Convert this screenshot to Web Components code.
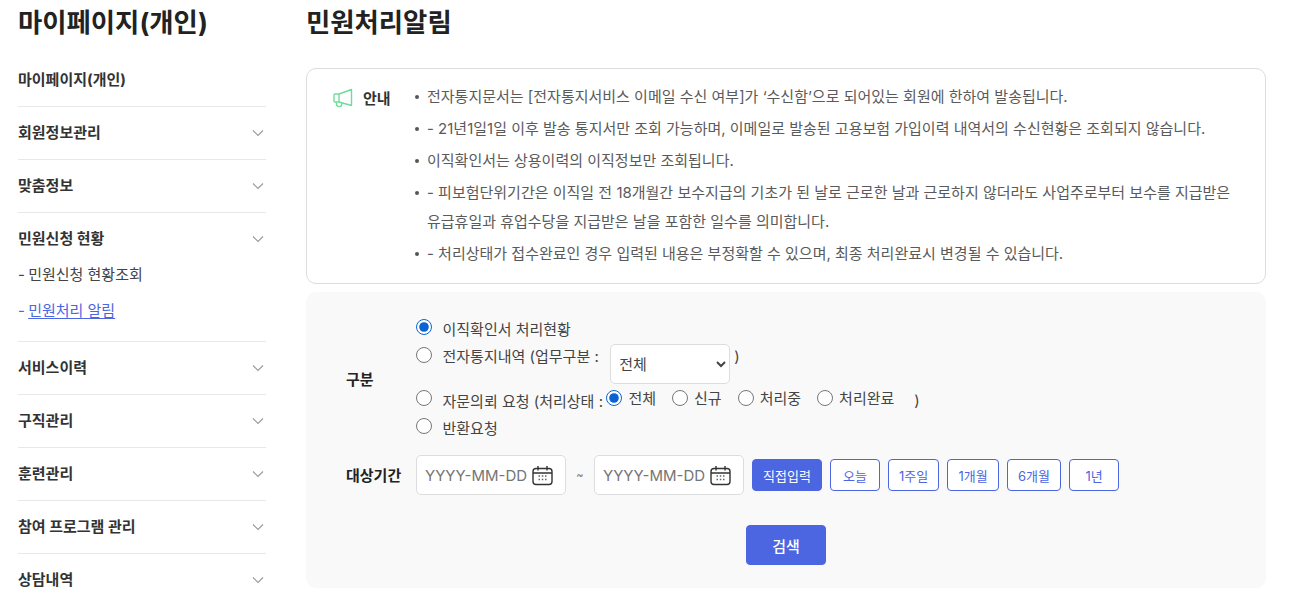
<!DOCTYPE html>
<html lang="ko">
<head>
<meta charset="utf-8">
<title>민원처리알림</title>
<style>
  html, body { margin: 0; height: 600px; overflow: hidden; background: #fff; }
  body { font-family: Inter, "Noto Sans CJK KR", sans-serif; color: #222; }
</style>
</head>
<body>
<my-page></my-page>

<script>
const FONT = `Inter, "Noto Sans CJK KR", sans-serif`;

// 왼쪽 메뉴 한 줄
class SideItem extends HTMLElement {
  connectedCallback() {
    const root = this.shadowRoot || this.attachShadow({ mode: 'open' });
    const arrow = this.hasAttribute('arrow');
    root.innerHTML = `
      <style>
        :host { display: block; border-bottom: 1px solid #e8e8e8; }
        :host([last]) { border-bottom: 0; }
        .head {
          box-sizing: border-box; height: 52px; padding-bottom: 4px; display: flex; align-items: center; justify-content: space-between;
          font-size: 15px; font-weight: 700; color: #333;
        }
        svg { width: 12px; height: 8px; margin: 3px 2px 0 0; }
        ::slotted(*) { display: block; }
      </style>
      <div class="head">
        <span>${this.getAttribute('label')}</span>
        ${arrow ? `<svg viewBox="0 0 12 8"><path d="M1 1.5l5 5 5-5" fill="none" stroke="#999" stroke-width="1.1"/></svg>` : ''}
      </div>
      <slot></slot>`;
  }
}
customElements.define('side-item', SideItem);

class SideMenu extends HTMLElement {
  constructor() {
    super();
    this.attachShadow({ mode: 'open' }).innerHTML = `
      <style>
        :host { display: block; width: 248px; flex: none; font-family: ${FONT}; }
        h2 { margin: 0; height: 54px; font-size: 26.4px; line-height: 44px; font-weight: 700; color: #222; }
        .sub { font-size: 15px; color: #444; height: 36px; line-height: 36px; }
        .sub b { font-weight: 400; margin-right: -1px; }
        .sub.on { color: #4c65e0; }
        .sub.on u { text-underline-offset: 2px; }
        .subs { margin-top: -8px; padding-bottom: 12px; }
      </style>
      <h2>마이페이지(개인)</h2>
      <side-item label="마이페이지(개인)"></side-item>
      <side-item label="회원정보관리" arrow></side-item>
      <side-item label="맞춤정보" arrow></side-item>
      <side-item label="민원신청 현황" arrow>
        <div class="subs">
          <div class="sub"><b>-</b> 민원신청 현황조회</div>
          <div class="sub on"><b>-</b> <u>민원처리 알림</u></div>
        </div>
      </side-item>
      <side-item label="서비스이력" arrow></side-item>
      <side-item label="구직관리" arrow></side-item>
      <side-item label="훈련관리" arrow></side-item>
      <side-item label="참여 프로그램 관리" arrow></side-item>
      <side-item label="상담내역" arrow last></side-item>`;
  }
}
customElements.define('side-menu', SideMenu);

class NoticeBox extends HTMLElement {
  constructor() {
    super();
    this.attachShadow({ mode: 'open' }).innerHTML = `
      <style>
        :host {
          display: flex; box-sizing: border-box; height: 216px; padding: 13px 0 0 26px;
          border: 1px solid #ddd; border-radius: 10px; background: #fff; font-family: ${FONT};
        }
        .tit { width: 81px; flex: none; display: flex; gap: 9px; height: 30px; align-items: center; font-size: 15px; font-weight: 700; color: #333; }
        svg { width: 21px; height: 21px; }
        ul { margin: 0; padding: 0; list-style: none; font-size: 15px; line-height: 29px; color: #5a5a5a; }
        li { position: relative; padding-left: 13px; margin-bottom: 3px; }
        li::before { content: ""; position: absolute; left: 1px; top: 13px; width: 4px; height: 4px; border-radius: 50%; background: #555; }
      </style>
      <div class="tit">
        <svg viewBox="0 0 21 21" fill="none" stroke="#6fdc9b" stroke-width="1.4" stroke-linejoin="round">
          <path d="M2 7H6L18.5 2.5V18.5L6 15H2a1 1 0 0 1-1-1V8a1 1 0 0 1 1-1z"/>
          <path d="M6 7v8M3.5 15.5v1.5a2.6 2.6 0 0 0 5.2 0v-1.3"/>
        </svg>
        <span>안내</span>
      </div>
      <ul>
        <li>전자통지문서는 [전자통지서비스 이메일 수신 여부]가 ‘수신함’으로 되어있는 회원에 한하여 발송됩니다.</li>
        <li>- 21년1일1일 이후 발송 통지서만 조회 가능하며, 이메일로 발송된 고용보험 가입이력 내역서의 수신현황은 조회되지 않습니다.</li>
        <li>이직확인서는 상용이력의 이직정보만 조회됩니다.</li>
        <li>- 피보험단위기간은 이직일 전 18개월간 보수지급의 기초가 된 날로 근로한 날과 근로하지 않더라도 사업주로부터 보수를 지급받은<br>유급휴일과 휴업수당을 지급받은 날을 포함한 일수를 의미합니다.</li>
        <li>- 처리상태가 접수완료인 경우 입력된 내용은 부정확할 수 있으며, 최종 처리완료시 변경될 수 있습니다.</li>
      </ul>`;
  }
}
customElements.define('notice-box', NoticeBox);

// 날짜 입력칸
class DateField extends HTMLElement {
  constructor() {
    super();
    this.attachShadow({ mode: 'open' }).innerHTML = `
      <style>
        :host {
          display: flex; align-items: center; box-sizing: border-box; width: 150px; height: 40px; padding: 0 10px 0 8px; gap: 5px;
          background: #fff; border: 1px solid #ddd; border-radius: 5px; font-size: 15px; color: #757575; font-family: ${FONT}; white-space: nowrap;
        }
        svg { width: 21px; height: 21px; flex: none; }
      </style>
      <span>YYYY-MM-DD</span>
      <svg viewBox="0 0 21 21" fill="none" stroke="#333" stroke-width="1.4">
        <rect x="1" y="3.5" width="19" height="16" rx="3"/>
        <path d="M1 8h19M6 1v4.5M15 1v4.5"/>
        <path d="M6.5 11h1.5M9.8 11h1.5M13 11h1.5M6.5 14.5h1.5M9.8 14.5h1.5M13 14.5h1.5" stroke="#666" stroke-width="1.3"/>
      </svg>`;
  }
}
customElements.define('date-field', DateField);

class SearchForm extends HTMLElement {
  constructor() {
    super();
    this.attachShadow({ mode: 'open' }).innerHTML = `
      <style>
        :host { display: block; box-sizing: border-box; height: 296px; margin-top: 8px; padding: 23px 40px 0; background: #f9f9f9; border-radius: 10px; font-family: ${FONT}; }
        .row { display: flex; align-items: center; }
        .lab { width: 70px; flex: none; font-size: 15px; font-weight: 700; color: #222; }
        .kind { padding-top: 1px; }
        .span { padding-bottom: 2px; }
        .opts { font-size: 15px; color: #444; }
        .opt { display: flex; align-items: center; white-space: nowrap; }
        label { display: inline-flex; align-items: center; }
        input { width: 16px; height: 16px; margin: 0 10.5px 0 0; flex: none; accent-color: #0a63d0; }
        .t { padding-top: 4px; }
        .o1 .t { padding-top: 3px; }
        .o4 .t { padding-top: 2px; }
        .o1 { height: 24px; }
        .o2 { height: 45px; align-items: flex-start; padding-top: 8px; box-sizing: border-box; }
        .o2 span.tx { line-height: 20px; }
        select {
          width: 120px; height: 40px; margin: -3px 4px 0 11.5px; padding: 0 0 0 4px; font: inherit; color: #444;
          background: #fff; border: 1px solid #ddd; border-radius: 5px;
        }
        .o3, .o4 { height: 28px; }
        .o3 .in { margin-left: 3.5px; display: flex; }
        .o3 .in label { margin-right: 16px; }
        .o3 .in input { margin-right: 6px; }
        .o3 .in span { padding-bottom: 1px; }
        .period { margin-top: 15px; }
        .tilde { width: 28px; text-align: center; font-size: 11px; color: #777; }
        .btns { display: flex; gap: 8px; margin-left: 8px; }
        button {
          height: 32px; padding: 0; font: 13px ${FONT}; color: #4c65e0; background: #fff;
          border: 1px solid #4c65e0; border-radius: 4px;
        }
        button.on { background: #4c65e0; color: #fff; }
        .go { display: flex; justify-content: center; margin-top: 30px; }
        .go button { width: 80px; height: 40px; font-size: 15px; font-weight: 500; background: #4c65e0; color: #fff; }
      </style>
      <div class="row">
        <div class="lab kind">구분</div>
        <div class="opts">
          <div class="opt o1"><label><input type="radio" name="g" checked><span class="t">이직확인서 처리현황</span></label></div>
          <div class="opt o2">
            <input type="radio" name="g"><span class="tx">전자통지내역 (업무구분 :</span>
            <select><option>전체</option></select><span class="tx">)</span>
          </div>
          <div class="opt o3">
            <input type="radio" name="g"><span class="t">자문의뢰 요청 (처리상태 :</span>
            <div class="in">
              <label><input type="radio" name="s" checked><span>전체</span></label>
              <label><input type="radio" name="s"><span>신규</span></label>
              <label><input type="radio" name="s"><span>처리중</span></label>
              <label><input type="radio" name="s"><span>처리완료</span></label>
            </div>
            <span class="t" style="margin-left:4px">)</span>
          </div>
          <div class="opt o4"><label><input type="radio" name="g"><span class="t">반환요청</span></label></div>
        </div>
      </div>
      <div class="row period">
        <div class="lab span">대상기간</div>
        <date-field></date-field>
        <div class="tilde">~</div>
        <date-field></date-field>
        <div class="btns">
          <button class="on" style="width:70px">직접입력</button>
          <button style="width:50px">오늘</button>
          <button style="width:51px">1주일</button>
          <button style="width:52px">1개월</button>
          <button style="width:54px">6개월</button>
          <button style="width:50px">1년</button>
        </div>
      </div>
      <div class="go"><button>검색</button></div>`;
  }
}
customElements.define('search-form', SearchForm);

class MyPage extends HTMLElement {
  constructor() {
    super();
    this.attachShadow({ mode: 'open' }).innerHTML = `
      <style>
        :host { display: flex; gap: 40px; padding: 0 24px 0 18px; font-family: ${FONT}; }
        main { flex: 1; min-width: 0; }
        h1 { margin: 0; height: 68px; font-size: 26.4px; line-height: 44px; font-weight: 700; color: #222; }
      </style>
      <side-menu></side-menu>
      <main>
        <h1>민원처리알림</h1>
        <notice-box></notice-box>
        <search-form></search-form>
      </main>`;
  }
}
customElements.define('my-page', MyPage);
</script>
</body>
</html>
